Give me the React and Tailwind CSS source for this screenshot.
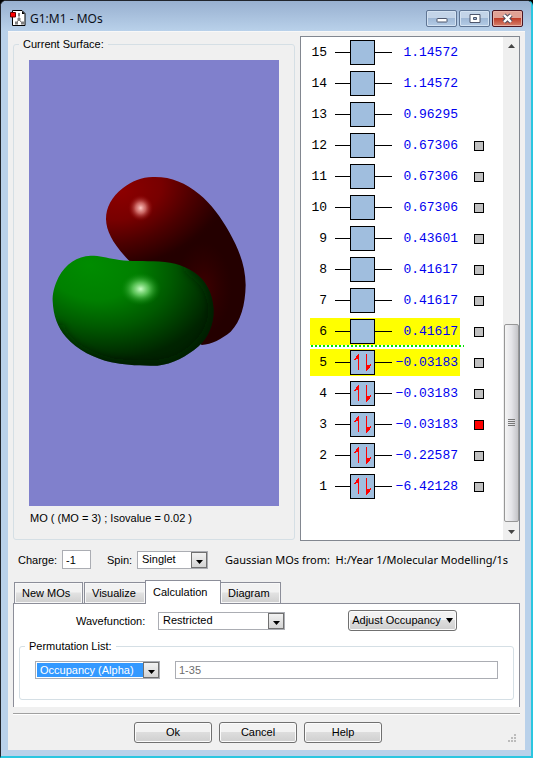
import React from "react";
import clsx from "clsx";

const ORBITALS = [
  { n: 15, energy: "1.14572" },
  { n: 14, energy: "1.14572" },
  { n: 13, energy: "0.96295" },
  { n: 12, energy: "0.67306", surface: "off" },
  { n: 11, energy: "0.67306", surface: "off" },
  { n: 10, energy: "0.67306", surface: "off" },
  { n: 9, energy: "0.43601", surface: "off" },
  { n: 8, energy: "0.41617", surface: "off" },
  { n: 7, energy: "0.41617", surface: "off" },
  { n: 6, energy: "0.41617", surface: "off", highlight: true },
  { n: 5, energy: "−0.03183", surface: "off", occupied: true, highlight: true },
  { n: 4, energy: "−0.03183", surface: "off", occupied: true },
  { n: 3, energy: "−0.03183", surface: "on", occupied: true },
  { n: 2, energy: "−0.22587", surface: "off", occupied: true },
  { n: 1, energy: "−6.42128", surface: "off", occupied: true },
];

function AppIcon() {
  return (
    <svg width="16" height="16" viewBox="0 0 16 16" aria-hidden="true">
      <path d="M2.500 .5h9.500l3 3v12h-12.500z" fill="#fff" stroke="#000" />
      <path d="M12 1v3h3z" fill="#000" />
      <path d="M9 4v6l-3 3M9 10l3 3" fill="none" stroke="#808080" />
      <path d="M8 3h2v3H8zM7.500 8h3v3h-3zM5 11.500h3v3H5zM11 11.500h3v3h-3z" fill="#808080" />
      <path d="M.5 2.500h5v4.500h-5z" fill="#f00" stroke="#600" />
    </svg>
  );
}

function CaptionButton({ label, close, children }) {
  return (
    <button
      type="button"
      aria-label={label}
      className={clsx(
        "flex h-[17px] w-[31px] items-center justify-center rounded-[2px] border",
        close
          ? "border-[#4b1420] bg-linear-to-b from-[#e0a195] from-45% via-[#bf3c28] via-50% to-[#d4806c] shadow-[inset_0_0_0_1px_#e8b0a4]"
          : "border-[#5f7594] bg-linear-to-b from-[#c3d4e8] from-45% via-[#9fb8d6] via-50% to-[#b4cce6] shadow-[inset_0_0_0_1px_#d3e2f2]"
      )}
    >
      {children}
    </button>
  );
}

function TitleBar() {
  return (
    <header className="flex h-[30px] items-start bg-linear-to-b from-[#98b0d0] to-[#b9d1ea] pl-[9px] pr-[8px] pt-[9px]">
      <AppIcon />
      <h1 className="ml-1 flex-1 font-['Noto_Sans','Open_Sans',sans-serif] text-[12px] leading-[18px] text-[#0c1018]">
        G1:M1 - MOs
      </h1>
      <div className="flex gap-[2px]">
        <CaptionButton label="Minimize">
          <svg width="12" height="11" viewBox="0 0 12 11">
            <rect x="1" y="5.5" width="10" height="3.5" rx=".5" fill="#fff" stroke="#4d566c" />
          </svg>
        </CaptionButton>
        <CaptionButton label="Maximize">
          <svg width="12" height="11" viewBox="0 0 12 11">
            <path fillRule="evenodd" d="M1 1.500h10v8H1zM4.500 4.500v2h3v-2z" fill="#fff" stroke="#4d566c" />
          </svg>
        </CaptionButton>
        <CaptionButton label="Close" close>
          <svg width="13" height="11" viewBox="0 0 13 11">
            <path d="M3 2l7 7M10 2L3 9" stroke="#4d4a5c" strokeWidth="4.4" />
            <path d="M3 2l7 7M10 2L3 9" stroke="#fff" strokeWidth="2.4" />
          </svg>
        </CaptionButton>
      </div>
    </header>
  );
}

const RED_LOBE =
  "M345 36C310 34 278 46 248 70C215 96 198 128 198 162C199 202 222 240 268 288L330 400L485 540C515 538 545 522 572 500C602 470 616 420 617 360C616 300 596 252 568 202C542 156 514 118 478 88C436 54 396 36 345 36Z";
const GREEN_LOBE =
  "M152 272C112 273 76 298 56 336C42 364 37 388 38 408C40 452 52 486 78 516C112 556 164 580 214 592C252 600 296 603 352 602C398 598 440 574 476 544C506 516 522 476 521 434C518 384 498 346 462 322C426 298 388 290 340 289C296 288 258 290 226 283C200 278 180 272 152 272Z";

function OrbitalSurface() {
  return (
    <svg
      className="block h-[446px] w-full bg-[#8080cc]"
      viewBox="0 0 250 446"
      role="img"
      aria-label="Molecular orbital 3 isosurface"
    >
      <defs>
        <radialGradient id="red" gradientUnits="userSpaceOnUse" cx="0" cy="0" r="1" gradientTransform="translate(245 80) rotate(-15) scale(345 235)">
          <stop offset="0" stopColor="#8c0000" />
          <stop offset=".35" stopColor="#780000" />
          <stop offset=".65" stopColor="#4c0000" />
          <stop offset=".95" stopColor="#260000" />
          <stop offset="1" stopColor="#240000" />
        </radialGradient>
        <radialGradient id="fold" gradientUnits="userSpaceOnUse" cx="0" cy="0" r="1" gradientTransform="translate(490 370) scale(85 140)">
          <stop offset="0" stopColor="#480000" stopOpacity=".75" />
          <stop offset="1" stopColor="#380000" stopOpacity="0" />
        </radialGradient>
        <radialGradient id="green" gradientUnits="userSpaceOnUse" cx="0" cy="0" r="1" gradientTransform="translate(150 300) rotate(14) scale(400 290)">
          <stop offset="0" stopColor="#008c00" />
          <stop offset=".35" stopColor="#008000" />
          <stop offset=".62" stopColor="#005a00" />
          <stop offset=".95" stopColor="#002400" />
          <stop offset="1" stopColor="#002200" />
        </radialGradient>
        <radialGradient id="redGlint">
          <stop offset="0" stopColor="#ffc8c4" />
          <stop offset=".4" stopColor="#dc7c78" stopOpacity=".8" />
          <stop offset="1" stopColor="#900000" stopOpacity="0" />
        </radialGradient>
        <radialGradient id="greenGlint">
          <stop offset="0" stopColor="#c8ffc4" />
          <stop offset=".4" stopColor="#64cc60" stopOpacity=".85" />
          <stop offset="1" stopColor="#008000" stopOpacity="0" />
        </radialGradient>
        <filter id="soft">
          <feGaussianBlur stdDeviation="12" />
        </filter>
        <clipPath id="greenClip">
          <path d={GREEN_LOBE} />
        </clipPath>
      </defs>
      <g transform="translate(11 105) scale(.33333)">
        <path d={RED_LOBE} fill="url(#red)" />
        <path d={RED_LOBE} fill="url(#fold)" />
        <ellipse cx="302" cy="129" rx="38" ry="40" fill="url(#redGlint)" />
        <path d={GREEN_LOBE} fill="url(#green)" />
        <g clipPath="url(#greenClip)">
          <path
            d="M50 480C70 540 130 580 214 600C300 612 370 610 420 588C490 549 534 480 525 420C514 360 484 330 440 304"
            fill="none"
            stroke="#001c00"
            strokeOpacity=".6"
            strokeWidth="26"
            filter="url(#soft)"
          />
        </g>
        <ellipse cx="302" cy="372" rx="62" ry="50" fill="url(#greenGlint)" />
      </g>
    </svg>
  );
}

function GroupBox({ title, className, children }) {
  return (
    <fieldset className={clsx("min-w-0 rounded-[3px] border border-[#d5dfe5]", className)}>
      <legend className="ml-[5px] px-1 leading-4">{title}</legend>
      {children}
    </fieldset>
  );
}

function SpinPair() {
  return (
    <svg width="23" height="23" viewBox="0 0 23 23" aria-hidden="true" shapeRendering="crispEdges">
      <path d="M7 3h1v16H7zM6 4h1v4H6zM5 5h1v3H5zM4 7h1v2H4zM3 8h1v1H3z" fill="#f00" />
      <path d="M15 3h1v17h-1zM16 14h1v5h-1zM17 14h1v4h-1zM18 14h1v3h-1zM19 13h1v2h-1z" fill="#f00" />
    </svg>
  );
}

function OrbitalRow({ orbital }) {
  const { n, energy, surface, occupied, highlight } = orbital;
  return (
    <li className="flex h-[31px] items-center pl-[9px]">
      <div className={clsx("flex h-[27px] w-[150px] items-center", highlight && "bg-[#ff0]")}>
        <span className="w-[17px] text-right">{n}</span>
        <span className="ml-2 h-px w-[15px] bg-black" />
        <span className="size-[25px] border border-black bg-[#a0bede]">{occupied && <SpinPair />}</span>
        <span className="h-px w-[17px] bg-black" />
        <span className="flex-1 pr-[2px] text-right text-[#0000f0]">{energy}</span>
      </div>
      {surface && (
        <button
          type="button"
          aria-label={`Surface for orbital ${n}`}
          className={clsx("ml-[14px] size-[10px] border border-black", surface === "on" ? "bg-[#f00]" : "bg-[#c0c0c0]")}
        />
      )}
    </li>
  );
}

function EnergyDiagram() {
  return (
    <section className="flex h-[505px] w-[220px] border border-[#828790] bg-white">
      <div className="relative flex-1">
        <ol className="font-['Liberation_Mono',monospace] text-[13px] leading-4">
          {ORBITALS.map((o) => (
            <OrbitalRow key={o.n} orbital={o} />
          ))}
        </ol>
        {/* boundary between the occupied and the virtual levels */}
        <div className="absolute left-[10px] top-[308px] h-[2px] w-[153px] bg-[repeating-linear-gradient(90deg,#00e800_0_2px,transparent_2px_4px)]" />
      </div>
      <div className="flex w-4 flex-col items-center bg-[#efefef]">
        <svg className="mt-[7px]" width="7" height="4" viewBox="0 0 7 4">
          <path d="M3.500 0L7 4H0z" fill="#444" />
        </svg>
        <div className="mt-auto flex h-[198px] w-[15px] items-center justify-center rounded-[2px] border border-[#979797] bg-linear-to-r from-[#f5f5f5] via-[#e4e4e8] to-[#c4c4c8]">
          <svg width="7" height="9" viewBox="0 0 7 9">
            <path d="M0 .5h7M0 2.500h7M0 4.500h7M0 6.500h7" stroke="#777" />
          </svg>
        </div>
        <svg className="mb-[6px] mt-2" width="7" height="4" viewBox="0 0 7 4">
          <path d="M0 0h7L3.500 4z" fill="#444" />
        </svg>
      </div>
    </section>
  );
}

function Select({ id, label, value, className, selected }) {
  return (
    <div className={clsx("relative h-[18px] border border-[#abadb3] bg-white", className)}>
      <select
        id={id}
        aria-label={label}
        defaultValue={value}
        className={clsx(
          "block h-4 w-full appearance-none border-white leading-[14px] outline-none",
          selected ? "border bg-[#3399ff] pl-[3px] text-white" : "bg-white pb-[2px] pl-1"
        )}
      >
        <option>{value}</option>
      </select>
      <span className="pointer-events-none absolute right-0 top-0 flex h-4 w-4 items-center justify-center border border-[#707070] bg-linear-to-b from-[#f2f2f2] to-[#d4d4d4]">
        <svg className="mt-1" width="7" height="4" viewBox="0 0 7 4">
          <path d="M0 0h7L3.500 4z" fill="#000" />
        </svg>
      </span>
    </div>
  );
}

function Tab({ label, active, className }) {
  return (
    <button
      type="button"
      role="tab"
      aria-selected={!!active}
      className={clsx(
        "border border-b-0 border-[#8c8e99] pl-[7px] text-left",
        active
          ? "-mb-px h-6 bg-white pb-[2px]"
          : "h-[21px] bg-linear-to-b from-[#f2f2f2] from-45% via-[#e2e2e2] via-50% to-[#cfcfcf] pb-px shadow-[inset_0_0_0_1px_#f8f8f8]",
        className
      )}
    >
      {label}
    </button>
  );
}

function PushButton({ className, children }) {
  return (
    <button
      type="button"
      className={clsx(
        "flex h-[21px] items-center justify-center rounded-[3px] border border-[#707070] bg-linear-to-b from-[#f2f2f2] from-45% via-[#dddddd] via-50% to-[#cfcfcf] pb-px shadow-[inset_0_0_0_1px_#fbfbfb]",
        className
      )}
    >
      {children}
    </button>
  );
}

export default function App() {
  return (
    <div className="bg-black font-['Liberation_Sans',Arial,sans-serif] text-[11px] leading-4 text-black">
      <main className="overflow-hidden rounded-t-[6px] border border-b-2 border-r-2 border-[#20242c] border-b-[#2bc6e0] border-r-[#2bc6e0] bg-[#b9d1ea]">
        <TitleBar />
        <div className="mb-[6px] ml-[7px] mr-[6px] bg-[#f0f0f0] pt-[5px] shadow-[inset_0_1px_0_#f8f8f8]">
          <div className="flex gap-[5px] px-[5px]">
            <GroupBox title="Current Surface:" className="mb-px flex-1">
              <div className="px-[15px] pt-2">
                <OrbitalSurface />
                <p className="mt-1 pl-px">MO ( (MO = 3) ; Isovalue = 0.02 )</p>
              </div>
            </GroupBox>
            <EnergyDiagram />
          </div>

          <div className="mt-[9px] flex items-center px-[10px]">
            <label htmlFor="charge" className="w-11">Charge:</label>
            <input id="charge" defaultValue="-1" className="h-[19px] w-[29px] border border-[#abadb3] bg-white pl-[3px]" />
            <label htmlFor="spin" className="ml-4 w-[30px]">Spin:</label>
            <Select id="spin" value="Singlet" className="w-[71px]" />
            <p className="ml-[17px] min-w-0 flex-1 overflow-hidden whitespace-pre font-['Noto_Sans','Open_Sans',sans-serif] text-[11px]">
              Gaussian MOs from:  H:/Year 1/Molecular Modelling/1s
            </p>
          </div>

          <div className="mx-[5px] mt-[11px]">
            <div role="tablist" className="flex items-end pl-px">
              <Tab label="New MOs" className="w-[69px]" />
              <Tab label="Visualize" className="ml-px w-[61px] border-r-0" />
              <Tab label="Calculation" active className="relative w-[76px]" />
              <Tab label="Diagram" className="w-[60px] border-l-0" />
            </div>
            <div className="border border-b-0 border-[#8c8e99] bg-white px-[5px] pb-[7px] pt-[6px]">
              <div className="flex items-center pl-[57px]">
                <label htmlFor="wavefunction" className="w-[82px]">Wavefunction:</label>
                <Select id="wavefunction" value="Restricted" className="w-[127px]" />
                <PushButton className="ml-auto mr-[57px] w-[109px] gap-[5px]">
                  Adjust Occupancy
                  <svg width="7" height="5" viewBox="0 0 7 5">
                    <path d="M0 0h7L3.500 5z" fill="#000" />
                  </svg>
                </PushButton>
              </div>
              <GroupBox title="Permutation List:" className="mt-[7px]">
                <div className="flex gap-[15px] px-[15px] pb-5 pt-[7px]">
                  <Select id="occupancy" label="Permutation type" value="Occupancy (Alpha)" selected className="w-[125px]" />
                  <input
                    aria-label="Permutation list"
                    defaultValue="1-35"
                    className="h-[18px] min-w-0 flex-1 border border-[#abadb3] bg-white pl-[3px] text-[#6d6d6d]"
                  />
                </div>
              </GroupBox>
            </div>
          </div>

          <hr className="mx-[5px] mt-[6px] border-t border-[#a0a0a0] shadow-[0_1px_0_#fff]" />
          <footer className="flex items-start gap-[7px] pb-[7px] pl-[126px] pr-2 pt-2">
            <PushButton className="w-[78px]">Ok</PushButton>
            <PushButton className="w-[78px]">Cancel</PushButton>
            <PushButton className="w-[78px]">Help</PushButton>
            <svg className="ml-auto mt-3" width="9" height="9" viewBox="0 0 9 9" aria-hidden="true">
              <path d="M6 0h2v2H6zM3 3h2v2H3zM6 3h2v2H6zM0 6h2v2H0zM3 6h2v2H3zM6 6h2v2H6z" fill="#bcbcbc" />
            </svg>
          </footer>
        </div>
      </main>
    </div>
  );
}
